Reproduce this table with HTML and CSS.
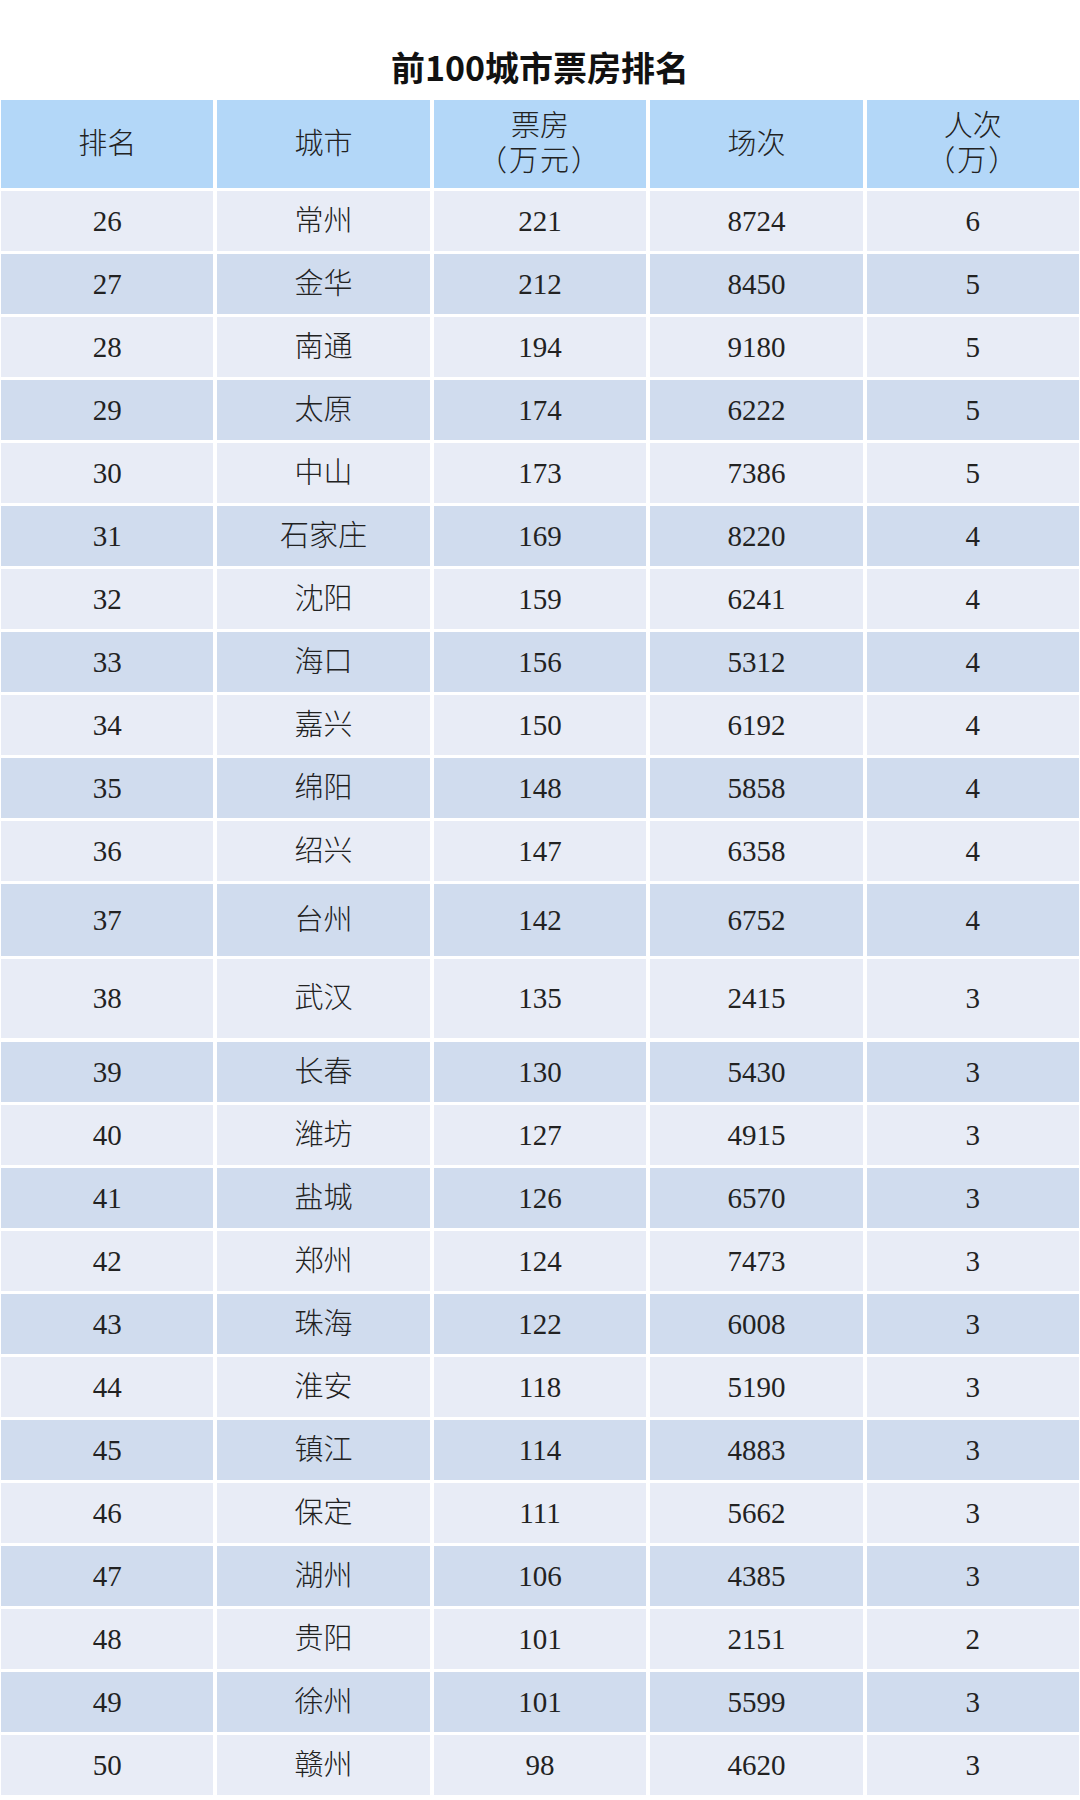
FILE: index.html
```html
<!DOCTYPE html>
<html lang="zh-CN">
<head>
<meta charset="utf-8">
<title>前100城市票房排名</title>
<link rel="stylesheet" href="styles.css">
</head>
<body>
<div class="page">
  <h1 class="title">前100城市票房排名</h1>
  <div class="table">
    <div class="row head">
      <div class="cell">排名</div>
      <div class="cell">城市</div>
      <div class="cell two">票房<br><span class="unit">（万元）</span></div>
      <div class="cell">场次</div>
      <div class="cell two">人次<br><span class="unit">（万）</span></div>
    </div>
    <div class="row light"><div class="cell">26</div><div class="cell">常州</div><div class="cell">221</div><div class="cell">8724</div><div class="cell">6</div></div>
    <div class="row dark"><div class="cell">27</div><div class="cell">金华</div><div class="cell">212</div><div class="cell">8450</div><div class="cell">5</div></div>
    <div class="row light"><div class="cell">28</div><div class="cell">南通</div><div class="cell">194</div><div class="cell">9180</div><div class="cell">5</div></div>
    <div class="row dark"><div class="cell">29</div><div class="cell">太原</div><div class="cell">174</div><div class="cell">6222</div><div class="cell">5</div></div>
    <div class="row light"><div class="cell">30</div><div class="cell">中山</div><div class="cell">173</div><div class="cell">7386</div><div class="cell">5</div></div>
    <div class="row dark"><div class="cell">31</div><div class="cell">石家庄</div><div class="cell">169</div><div class="cell">8220</div><div class="cell">4</div></div>
    <div class="row light"><div class="cell">32</div><div class="cell">沈阳</div><div class="cell">159</div><div class="cell">6241</div><div class="cell">4</div></div>
    <div class="row dark"><div class="cell">33</div><div class="cell">海口</div><div class="cell">156</div><div class="cell">5312</div><div class="cell">4</div></div>
    <div class="row light"><div class="cell">34</div><div class="cell">嘉兴</div><div class="cell">150</div><div class="cell">6192</div><div class="cell">4</div></div>
    <div class="row dark"><div class="cell">35</div><div class="cell">绵阳</div><div class="cell">148</div><div class="cell">5858</div><div class="cell">4</div></div>
    <div class="row light"><div class="cell">36</div><div class="cell">绍兴</div><div class="cell">147</div><div class="cell">6358</div><div class="cell">4</div></div>
    <div class="row dark tall1"><div class="cell">37</div><div class="cell">台州</div><div class="cell">142</div><div class="cell">6752</div><div class="cell">4</div></div>
    <div class="row light tall2"><div class="cell">38</div><div class="cell">武汉</div><div class="cell">135</div><div class="cell">2415</div><div class="cell">3</div></div>
    <div class="row dark"><div class="cell">39</div><div class="cell">长春</div><div class="cell">130</div><div class="cell">5430</div><div class="cell">3</div></div>
    <div class="row light"><div class="cell">40</div><div class="cell">潍坊</div><div class="cell">127</div><div class="cell">4915</div><div class="cell">3</div></div>
    <div class="row dark"><div class="cell">41</div><div class="cell">盐城</div><div class="cell">126</div><div class="cell">6570</div><div class="cell">3</div></div>
    <div class="row light"><div class="cell">42</div><div class="cell">郑州</div><div class="cell">124</div><div class="cell">7473</div><div class="cell">3</div></div>
    <div class="row dark"><div class="cell">43</div><div class="cell">珠海</div><div class="cell">122</div><div class="cell">6008</div><div class="cell">3</div></div>
    <div class="row light"><div class="cell">44</div><div class="cell">淮安</div><div class="cell">118</div><div class="cell">5190</div><div class="cell">3</div></div>
    <div class="row dark"><div class="cell">45</div><div class="cell">镇江</div><div class="cell">114</div><div class="cell">4883</div><div class="cell">3</div></div>
    <div class="row light"><div class="cell">46</div><div class="cell">保定</div><div class="cell">111</div><div class="cell">5662</div><div class="cell">3</div></div>
    <div class="row dark"><div class="cell">47</div><div class="cell">湖州</div><div class="cell">106</div><div class="cell">4385</div><div class="cell">3</div></div>
    <div class="row light"><div class="cell">48</div><div class="cell">贵阳</div><div class="cell">101</div><div class="cell">2151</div><div class="cell">2</div></div>
    <div class="row dark"><div class="cell">49</div><div class="cell">徐州</div><div class="cell">101</div><div class="cell">5599</div><div class="cell">3</div></div>
    <div class="row light"><div class="cell">50</div><div class="cell">赣州</div><div class="cell">98</div><div class="cell">4620</div><div class="cell">3</div></div>
  </div>
</div>
</body>
</html>
```

FILE: styles.css
```css
html, body {
  margin: 0;
  padding: 0;
  background: #ffffff;
}

.page {
  width: 1080px;
}

.title {
  margin: 0 0 12px 0;
  padding-top: 46px;
  height: 42px;
  line-height: 42px;
  text-align: center;
  font-family: "Noto Sans CJK SC", sans-serif;
  font-weight: 700;
  font-size: 34px;
  color: #111111;
}

.table {
  display: flex;
  flex-direction: column;
  gap: 3px;
  padding: 0 1px;
}

.row {
  display: grid;
  grid-template-columns: repeat(5, 1fr);
  column-gap: 4px;
  height: 60px;
}

.row.head {
  height: 88px;
}

.row.tall1 {
  height: 72px;
}

.row.tall2 {
  height: 79px;
  margin-bottom: 1px;
}

.cell {
  display: flex;
  align-items: center;
  justify-content: center;
  flex-direction: column;
  text-align: center;
  font-family: "Liberation Serif", "Noto Sans CJK SC", serif;
  font-weight: 300;
  font-size: 29px;
  line-height: 1.2;
  color: #222222;
}

.cell.two {
  display: block;
  padding-top: 9px;
  line-height: 35px;
}

.unit {
  letter-spacing: 2px;
  word-spacing: 0;
}

.head .cell {
  background: #b3d7f8;
}

.light .cell {
  background: #e8ecf6;
}

.dark .cell {
  background: #d0dcee;
}
```
